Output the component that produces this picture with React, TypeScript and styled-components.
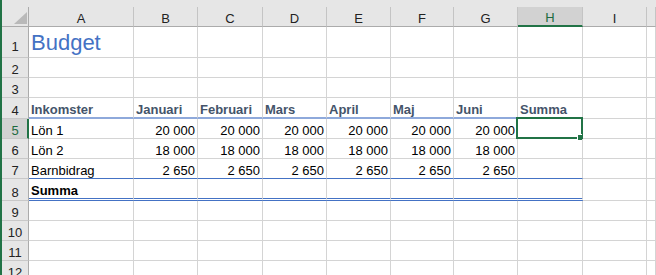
import React from 'react';
import styled, { createGlobalStyle, css } from 'styled-components';

const GlobalStyle = createGlobalStyle`
  html, body {
    margin: 0;
    padding: 0;
    background: #ffffff;
  }
  body {
    font-family: 'Liberation Sans', Arial, sans-serif;
    overflow: hidden;
  }
`;

type Edge = 'grid' | 'head' | 'rule' | 'total';
type Kind = 'plain' | 'title' | 'heading' | 'strong';

interface CellData {
  text?: string;
  kind?: Kind;
  right?: boolean;
}

const COLS = ['A', 'B', 'C', 'D', 'E', 'F', 'G', 'H', 'I', ''];
const ROW_HEIGHTS = [31, 20, 20, 21, 20, 20, 20, 22, 20, 20, 20, 20];
const SELECTED = { row: 5, col: 7 };

const months = ['Januari', 'Februari', 'Mars', 'April', 'Maj', 'Juni'];
const num = (v: string): CellData => ({ text: v, right: true });
const six = (v: string) => Array.from({ length: 6 }, () => num(v));

const rows: CellData[][] = [
  [{ text: 'Budget', kind: 'title' }],
  [],
  [],
  [
    { text: 'Inkomster', kind: 'heading' },
    ...months.map((m) => ({ text: m, kind: 'heading' as Kind })),
    { text: 'Summa', kind: 'heading' },
  ],
  [{ text: 'Lön 1' }, ...six('20\u00a0000')],
  [{ text: 'Lön 2' }, ...six('18\u00a0000')],
  [{ text: 'Barnbidrag' }, ...six('2\u00a0650')],
  [{ text: 'Summa', kind: 'strong' }],
  [],
  [],
  [],
  [],
];

// table style borders run from A to H
const edgeFor = (row: number, col: number): Edge => {
  if (col > 7) return 'grid';
  if (row === 4) return 'head';
  if (row === 7) return 'rule';
  if (row === 8) return 'total';
  return 'grid';
};

const edges: Record<Edge, string> = {
  grid: '1px solid #d4d4d4',
  head: '2px solid #8ea9db',
  rule: '1px solid #4472c4',
  total: '3px double #4472c4',
};

const App = () => {
  return (
    <>
      <GlobalStyle />
      <Window>
        <GreenEdge />
        <Sheet>
          <TopBand />
          <Grid>
            <Corner>
              <Triangle />
            </Corner>
            {COLS.map((c, i) => (
              <ColHeader key={c + i} $selected={i === SELECTED.col}>
                {c}
              </ColHeader>
            ))}
            {ROW_HEIGHTS.map((_, r) => {
              const rowNo = r + 1;
              const data = rows[r];
              return (
                <React.Fragment key={rowNo}>
                  <RowHeader $selected={rowNo === SELECTED.row} $lift={rowNo === 1}>
                    {rowNo}
                  </RowHeader>
                  {COLS.map((_, c) => {
                    const d = data[c] || {};
                    return (
                      <Cell
                        key={c}
                        $edge={edgeFor(rowNo, c)}
                        $right={d.right}
                        $kind={d.kind || 'plain'}
                      >
                        {d.text}
                        {rowNo === SELECTED.row && c === SELECTED.col && (
                          <Selection>
                            <FillHandle />
                          </Selection>
                        )}
                      </Cell>
                    );
                  })}
                </React.Fragment>
              );
            })}
          </Grid>
        </Sheet>
      </Window>
    </>
  );
};

export default App;

const Window = styled.div`
  display: flex;
  width: 656px;
  height: 275px;
  overflow: hidden;
  background: #ffffff;
`;

const GreenEdge = styled.div`
  width: 2px;
  flex-shrink: 0;
  background: #217346;
`;

const Sheet = styled.div`
  flex: 1;
  display: flex;
  flex-direction: column;
  min-width: 0;
`;

const TopBand = styled.div`
  height: 7px;
  flex-shrink: 0;
  background: #e6e6e6;
`;

const Grid = styled.div`
  display: grid;
  grid-template-columns: 27px 105px 64px 65px 64px 64px 63px 64px 65px 64px 1fr;
  grid-template-rows: 20px ${ROW_HEIGHTS.map((h) => `${h}px`).join(' ')};
`;

const headerText = css`
  box-sizing: border-box;
  display: flex;
  font-size: 13px;
  line-height: 15px;
  color: #222222;
  background: #e6e6e6;
`;

const Corner = styled.div`
  ${headerText};
  justify-content: flex-end;
  align-items: flex-end;
  padding: 0 1px 2px 0;
  border-right: 1px solid #ababab;
  border-bottom: 1px solid #ababab;
`;

const Triangle = styled.div`
  width: 13px;
  height: 12px;
  background: #b9b9b9;
  clip-path: polygon(100% 0, 100% 100%, 0 100%);
`;

const ColHeader = styled.div<{ $selected?: boolean }>`
  ${headerText};
  justify-content: center;
  align-items: flex-end;
  border-right: 1px solid #c4c4c4;
  border-bottom: 1px solid #ababab;
  overflow: hidden;
  ${(p) =>
    p.$selected &&
    css`
      background: #d2d2d2;
      color: #1d6b3f;
      border-bottom: 2px solid #217346;
      padding-top: 1px;
    `}
`;

const RowHeader = styled.div<{ $selected?: boolean; $lift?: boolean }>`
  ${headerText};
  justify-content: center;
  align-items: flex-end;
  padding-bottom: ${(p) => (p.$lift ? '3px' : '0')};
  border-right: 1px solid #ababab;
  border-bottom: 1px solid #c8c8c8;
  ${(p) =>
    p.$selected &&
    css`
      background: #d2d2d2;
      color: #1d6b3f;
      border-right: 2px solid #217346;
      padding-left: 1px;
    `}
`;

const kinds: Record<Kind, ReturnType<typeof css> | string> = {
  plain: '',
  title: css`
    font-size: 22px;
    line-height: 24px;
    color: #4472c4;
    padding-bottom: 2px;
  `,
  heading: css`
    font-weight: bold;
    color: #44546a;
  `,
  strong: css`
    font-weight: bold;
  `,
};

const Cell = styled.div<{ $edge: Edge; $right?: boolean; $kind: Kind }>`
  position: relative;
  box-sizing: border-box;
  display: flex;
  align-items: flex-end;
  justify-content: ${(p) => (p.$right ? 'flex-end' : 'flex-start')};
  padding: 0 2px 0 2px;
  border-right: 1px solid #d4d4d4;
  border-bottom: ${(p) => edges[p.$edge]};
  font-size: 13px;
  line-height: 15px;
  color: #000000;
  white-space: nowrap;
  ${(p) => kinds[p.$kind]};
`;

const Selection = styled.div`
  position: absolute;
  top: -2px;
  left: -2px;
  right: -1px;
  bottom: -1px;
  border: 2px solid #217346;
  pointer-events: none;
`;

const FillHandle = styled.div`
  position: absolute;
  right: -2px;
  bottom: -3px;
  width: 5px;
  height: 5px;
  background: #217346;
  box-shadow: -1px -1px 0 #ffffff;
`;
